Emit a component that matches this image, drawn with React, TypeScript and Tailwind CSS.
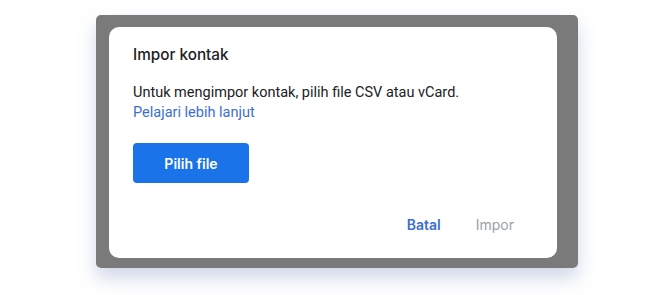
export default function App() {
  return (
    <div className="flex h-[295px] w-[672px] items-start justify-start bg-white font-['Roboto',sans-serif]">
      <div className="ml-[96px] mt-[15px] rounded-[5px] bg-[#7a7a7a] pb-[10px] pl-[13px] pr-[21px] pt-[12px] shadow-[0_10px_18px_rgba(120,140,190,0.35)]">
        <div className="flex h-[231px] w-[448px] flex-col rounded-[10px] bg-white pl-[24px] pr-[24px]">
          <h2 className="mt-[18px] text-[15.3px] font-medium leading-[20px] text-[#202124] font-['Inter',sans-serif]">
            Impor kontak
          </h2>
          <p className="mt-[18px] text-[14.5px] leading-[20px] text-[#202124]">
            Untuk mengimpor kontak, pilih file CSV atau vCard.
          </p>
          <a className="text-[14.5px] leading-[20px] text-[#3b6fd0]">Pelajari lebih lanjut</a>
          <button className="mt-[20px] flex h-[40px] w-[116px] items-center justify-center rounded-[4px] bg-[#1a73e8] text-[14px] font-semibold text-white font-['Inter',sans-serif]">
            Pilih file
          </button>
          <div className="mt-auto mb-[23px] flex justify-end gap-[35px] pr-[19px] text-[14px] font-['Inter',sans-serif]">
            <span className="font-semibold text-[#3b6fd0]">Batal</span>
            <span className="text-[#9aa0a6]">Impor</span>
          </div>
        </div>
      </div>
    </div>
  );
}
